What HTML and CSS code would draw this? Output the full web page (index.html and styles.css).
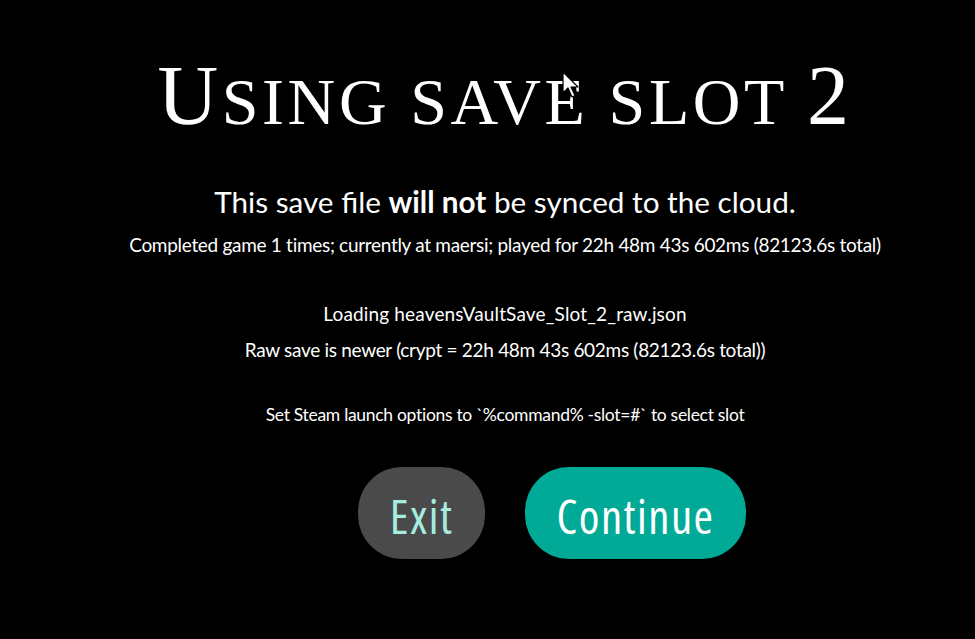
FILE: index.html
```html
<!DOCTYPE html>
<html lang="en">
<head>
<meta charset="utf-8">
<title>Save slot</title>
<link rel="stylesheet" href="styles.css">
</head>
<body>
<main class="screen">
  <h1 class="title"><span class="cap">U</span>sing save slot <span class="cap">2</span></h1>
  <p class="warning">This save file <strong>will not</strong> be synced to the cloud.</p>
  <p class="info">Completed game 1 times; currently at maersi; played for 22h 48m 43s 602ms (82123.6s total)</p>
  <div class="log">
    <p class="info info-file">Loading heavensVaultSave_Slot_2_raw.json</p>
    <p class="info">Raw save is newer (crypt = 22h 48m 43s 602ms (82123.6s total))</p>
  </div>
  <p class="hint">Set Steam launch options to `%command% -slot=#` to select slot</p>
  <div class="actions">
    <button class="btn btn-exit">Exit</button>
    <button class="btn btn-continue">Continue</button>
  </div>
</main>
<svg class="cursor" width="20" height="28" viewBox="0 0 20 28" aria-hidden="true">
  <path d="M1 1 L1 22 L6 17 L10 26 L13 24.5 L9 16 L16 16 Z" fill="#fff" stroke="#000" stroke-width="1.2" stroke-linejoin="round"/>
</svg>
</body>
</html>
```
FILE: styles.css
```css
html, body {
  margin: 0;
  padding: 0;
  background: #000;
  overflow: hidden;
  height: 100%;
}
.screen {
  width: 1010px;
  display: flex;
  flex-direction: column;
  align-items: center;
  text-align: center;
  color: #fff;
  font-family: "Lato", "Open Sans", sans-serif;
}
.title {
  margin: 64px 0 0;
  height: 64px;
  font-family: "Liberation Serif", "DejaVu Serif", serif;
  font-weight: normal;
  font-size: 66px;
  line-height: 64px;
  text-transform: uppercase;
  letter-spacing: 3.6px;
}
.title .cap {
  font-size: 84px;
}
.warning {
  margin: 54px 0 0;
  font-size: 29.7px;
  line-height: 40px;
}
.warning strong {
  font-weight: 700;
}
.info {
  margin: 0;
  font-size: 19px;
  letter-spacing: -0.3px;
  line-height: 36px;
}
.info-file {
  letter-spacing: 0.15px;
}
.warning + .info {
  margin-top: 5px;
}
.log {
  margin-top: 33px;
}
.hint {
  margin: 32px 0 0;
  font-size: 17.5px;
  letter-spacing: -0.3px;
  line-height: 30px;
}
.actions {
  margin-top: 37px;
  display: flex;
  gap: 40px;
  padding-left: 94px;
}
.btn {
  height: 92px;
  border: none;
  border-radius: 44px;
  font-family: "Open Sans", "Lato", sans-serif;
  font-stretch: 80%;
  font-size: 47px;
  letter-spacing: 1.5px;
  padding: 6px 0 0;
}
.btn-exit {
  width: 127px;
  background: #4a4a4a;
  color: #a6ece0;
}
.btn-continue {
  width: 221px;
  background: #00aa96;
  color: #fff;
}
.cursor {
  position: absolute;
  left: 562px;
  top: 71px;
}
```
